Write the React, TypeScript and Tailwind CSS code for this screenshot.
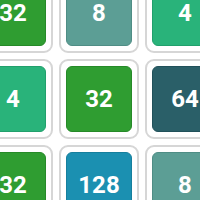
import React from 'react';

type Tile = { value: number; bg: string };

const tiles: Tile[] = [
  { value: 32, bg: 'bg-[#2f9d31] border-[#268a28]' },
  { value: 8, bg: 'bg-[#5c9e95] border-[#4f8d85]' },
  { value: 4, bg: 'bg-[#29b37a] border-[#21a06c]' },
  { value: 4, bg: 'bg-[#29b37a] border-[#21a06c]' },
  { value: 32, bg: 'bg-[#2f9d31] border-[#268a28]' },
  { value: 64, bg: 'bg-[#2a5f68] border-[#21515a]' },
  { value: 32, bg: 'bg-[#2f9d31] border-[#268a28]' },
  { value: 128, bg: 'bg-[#1b90b1] border-[#167f9d]' },
  { value: 8, bg: 'bg-[#5c9e95] border-[#4f8d85]' },
];

const App: React.FC = () => {
  return (
    <div className="w-[200px] h-[200px] overflow-hidden bg-white">
      <div className="grid grid-cols-[repeat(3,80px)] gap-[6px] -ml-[27px] -mt-[27px] w-max">
        {tiles.map((t, i) => (
          <div
            key={i}
            className="w-[80px] h-[80px] rounded-[9px] border-2 border-[#d6d6d6] bg-white p-[5px]"
          >
            <div
              className={`w-full h-full rounded-[6px] border ${t.bg} flex items-center justify-center text-white font-bold text-[24px] leading-none`}
              style={{ fontFamily: 'Roboto, "Liberation Sans", sans-serif' }}
            >
              {t.value}
            </div>
          </div>
        ))}
      </div>
    </div>
  );
};

export default App;
